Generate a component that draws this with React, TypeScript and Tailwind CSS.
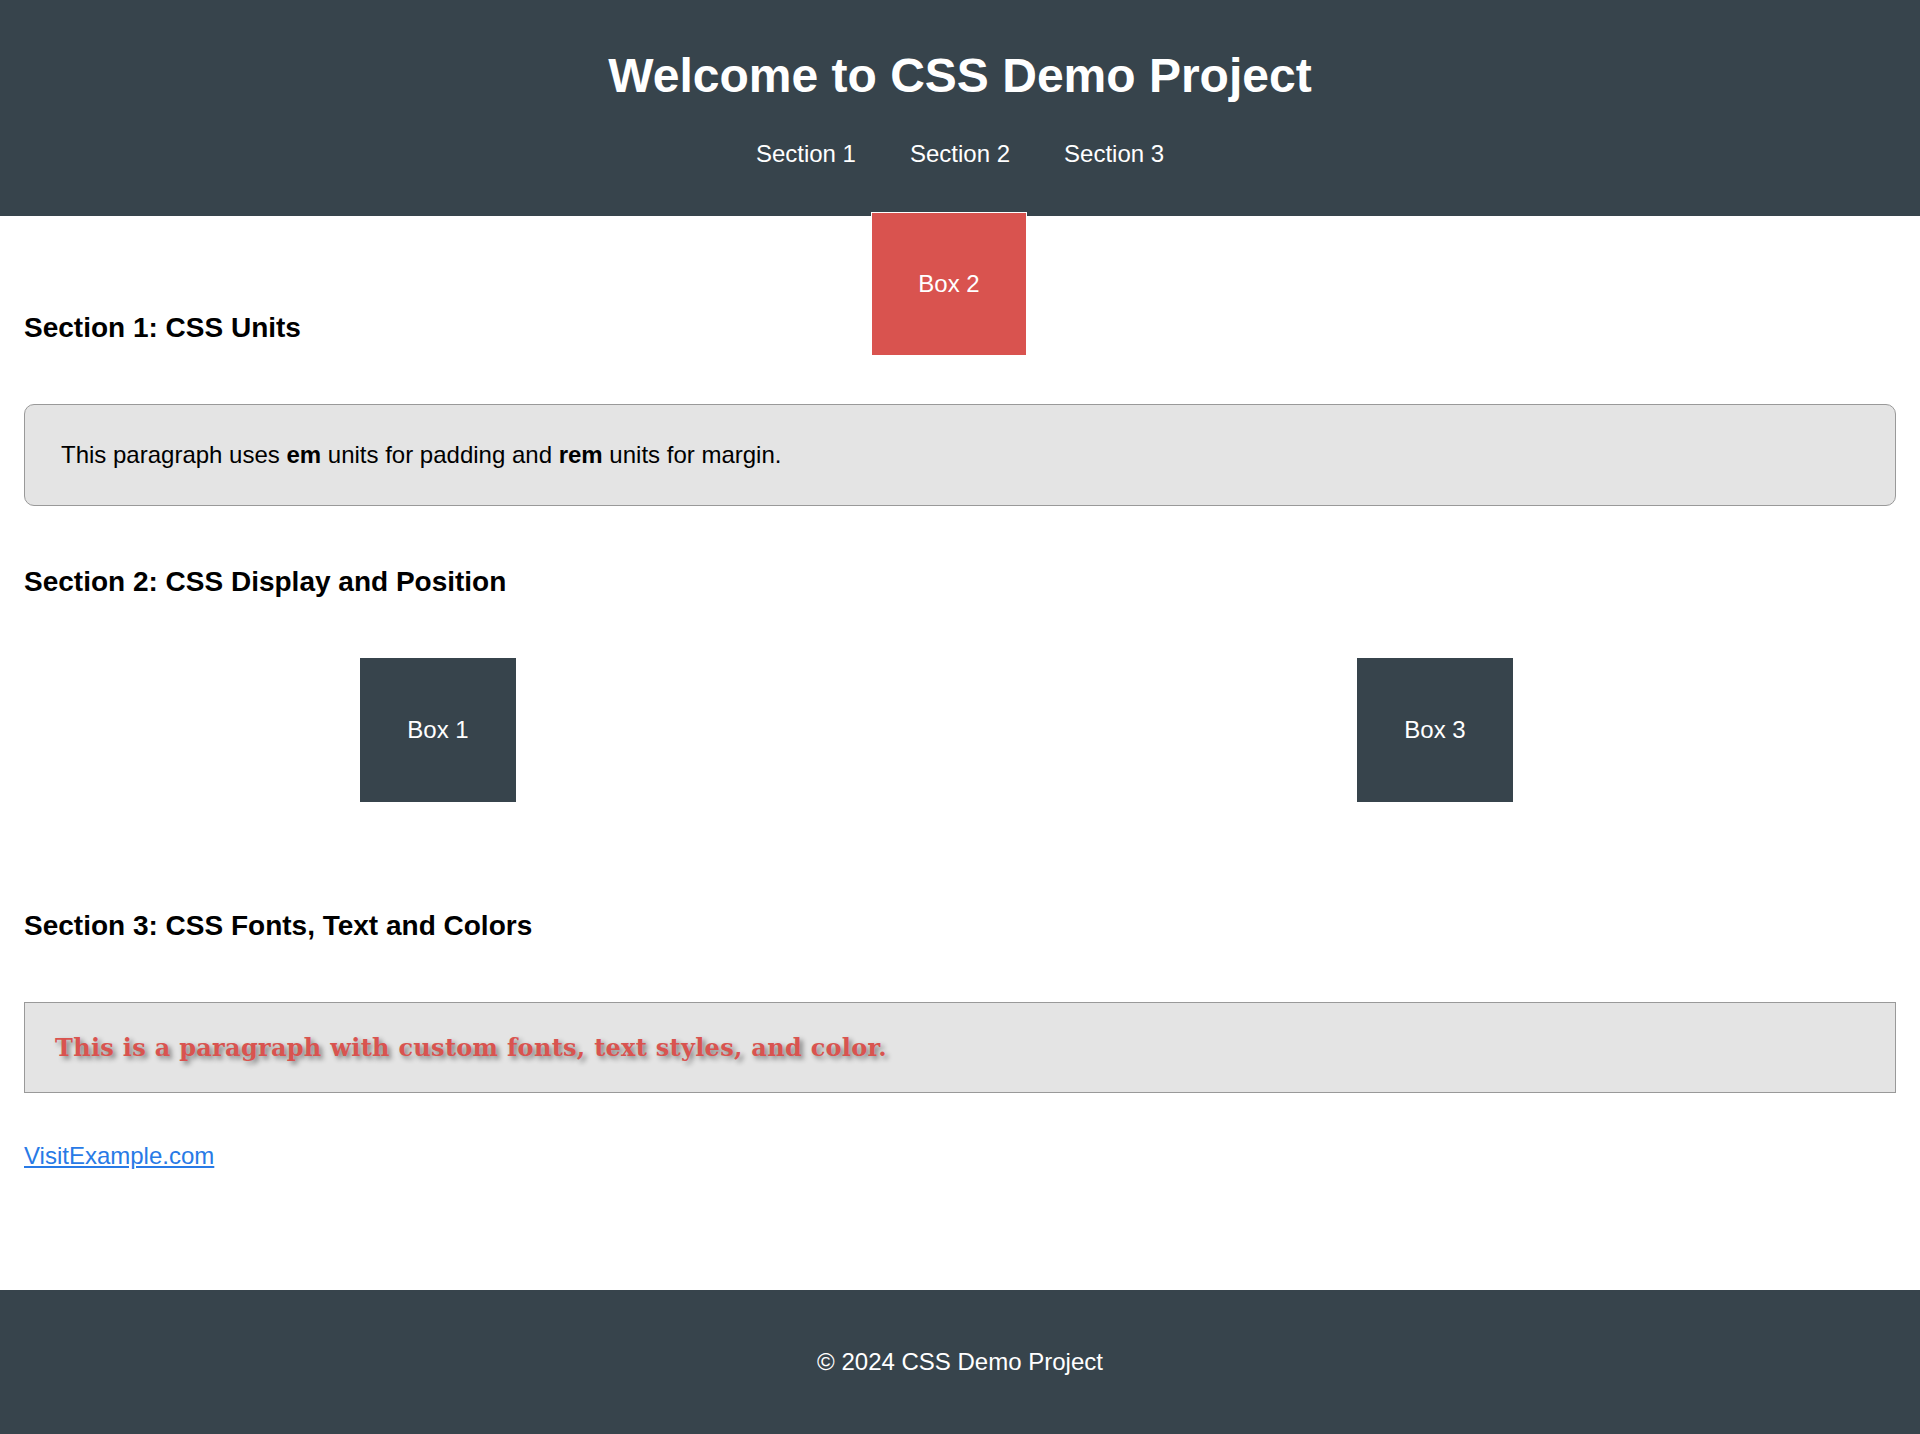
import React from 'react';

const navItems = ['Section 1', 'Section 2', 'Section 3'];

const Box = ({ label, className = '' }: { label: string; className?: string }) => (
  <div className={`flex h-[144px] w-[156px] shrink-0 items-center justify-center text-[24px] leading-[28px] text-white ${className}`}>
    {label}
  </div>
);

export default function App() {
  return (
    <div className="flex min-h-[1434px] flex-col bg-white font-['Liberation_Sans',Arial,sans-serif] text-black">
      {/* Header */}
      <header className="flex h-[216px] flex-col items-center bg-[#37444c] text-white">
        <h1 className="mt-[48px] text-[48px] font-bold leading-[56px]">Welcome to CSS Demo Project</h1>
        <nav className="mt-[36px] flex gap-[54px] text-[24px] leading-[28px]">
          {navItems.map((item) => (
            <a key={item} href={`#${item.replace(' ', '').toLowerCase()}`}>
              {item}
            </a>
          ))}
        </nav>
      </header>

      {/* Content */}
      <main className="flex-1 px-[24px]">
        <section id="section1">
          <h3 className="mt-[96px] text-[28px] font-bold leading-[32px]">Section 1: CSS Units</h3>
          <p className="mt-[60px] rounded-[10px] border border-[#999] bg-[#e4e4e4] p-[36px] text-[24px] leading-[28px]">
            This paragraph uses <strong>em</strong> units for padding and <strong>rem</strong> units for margin.
          </p>
        </section>

        <section id="section2">
          <h3 className="mt-[60px] text-[28px] font-bold leading-[32px]">Section 2: CSS Display and Position</h3>
          <div className="mt-[60px] flex">
            <Box label="Box 1" className="ml-[336px] bg-[#37444c]" />
            <Box label="Box 2" className="relative -top-[446px] ml-[355px] border border-white bg-[#d9534f]" />
            <Box label="Box 3" className="ml-[330px] bg-[#37444c]" />
          </div>
        </section>

        <section id="section3">
          <h3 className="mt-[108px] text-[28px] font-bold leading-[32px]">Section 3: CSS Fonts, Text and Colors</h3>
          <p className="mt-[60px] border border-[#999] bg-[#e4e4e4] px-[30px] py-[30px] font-['DejaVu_Serif',serif] text-[24px] font-bold leading-[29px] tracking-[0.3px] text-[#d9534f] [text-shadow:3px_3px_5px_rgba(0,0,0,0.45)]">
            This is a paragraph with custom fonts, text styles, and color.
          </p>
          <a href="https://www.example.com" className="mt-[49px] block w-fit text-[24px] leading-[28px] text-[#287ae6] underline">
            VisitExample.com
          </a>
        </section>
      </main>

      {/* Footer */}
      <footer className="mt-[120px] flex h-[144px] items-center justify-center bg-[#37444c] text-[24px] leading-[28px] text-white">
        <p>&copy; 2024 CSS Demo Project</p>
      </footer>
    </div>
  );
}
